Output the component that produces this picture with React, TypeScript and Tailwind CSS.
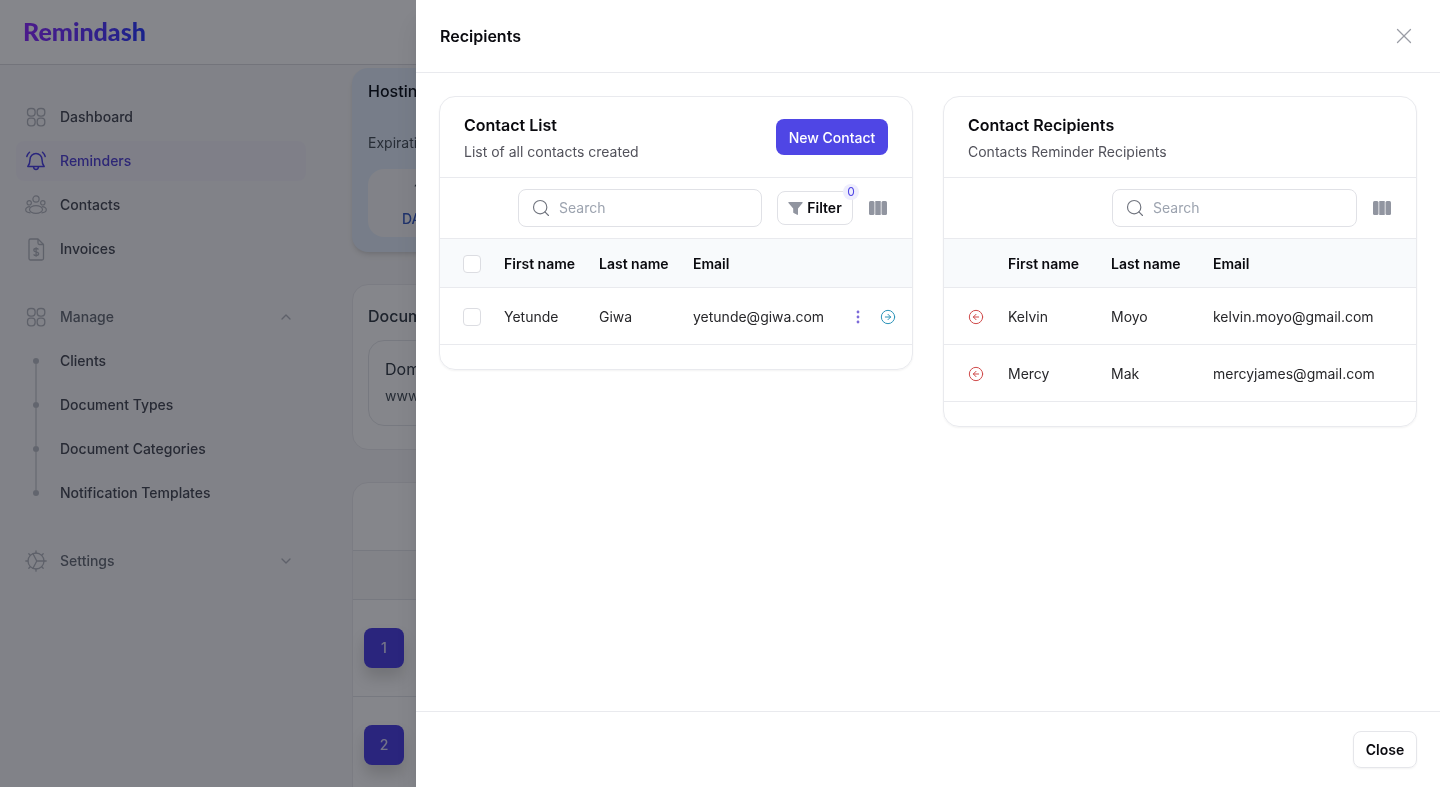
import { ChevronDown, ChevronUp, CircleArrowLeft, CircleArrowRight, Search, X } from "lucide-react";

type Contact = { first: string; last: string; email: string };

const available: Contact[] = [{ first: "Yetunde", last: "Giwa", email: "yetunde@giwa.com" }];
const recipients: Contact[] = [
  { first: "Kelvin", last: "Moyo", email: "kelvin.moyo@gmail.com" },
  { first: "Mercy", last: "Mak", email: "mercyjames@gmail.com" },
];

function GridIcon() {
  return (
    <svg width="24" height="24" viewBox="0 0 24 24" fill="none" stroke="currentColor" strokeWidth="1.3">
      <rect x="3.5" y="3.5" width="7.6" height="7.6" rx="3" />
      <rect x="13.2" y="3.5" width="7.6" height="7.6" rx="3" />
      <rect x="3.5" y="13.2" width="7.6" height="7.6" rx="3" />
      <rect x="13.2" y="13.2" width="7.6" height="7.6" rx="3" />
    </svg>
  );
}

function BellIcon() {
  return (
    <svg width="24" height="24" viewBox="0 0 24 24" fill="none" stroke="currentColor" strokeWidth="1.5" strokeLinecap="round" strokeLinejoin="round">
      <path d="M6 10.5a6 6 0 0 1 12 0c0 4 1 5.6 2.2 7H3.8C5 16.100 6 14.500 6 10.500Z" />
      <path d="M9.500 17.800c.3 1.800 1.300 2.700 2.500 2.700s2.200-.9 2.500-2.700" />
      <path d="M2.800 7.500C3.300 5.700 4.200 4.300 5.500 3.200M21.200 7.500c-.5-1.800-1.400-3.200-2.700-4.300" />
    </svg>
  );
}

function PeopleIcon() {
  return (
    <svg width="24" height="24" viewBox="0 0 24 24" fill="none" stroke="currentColor" strokeWidth="1.2">
      <circle cx="12" cy="6" r="3.100" />
      <circle cx="5.200" cy="9.800" r="2.200" />
      <circle cx="18.800" cy="9.800" r="2.200" />
      <ellipse cx="12" cy="16.500" rx="6.500" ry="3.900" />
      <path d="M6.200 13.600C3.400 13.800 1.700 15.200 1.700 16.800s1.800 2.800 4.800 3M17.800 13.600c2.800.2 4.500 1.600 4.500 3.200s-1.800 2.800-4.800 3" />
    </svg>
  );
}

function InvoiceIcon() {
  return (
    <svg width="24" height="24" viewBox="0 0 24 24" fill="none" stroke="currentColor" strokeWidth="1.3" strokeLinejoin="round">
      <path d="M5 3.500a1.500 1.500 0 0 1 1.500-1.500H14l5.500 5.500v14a1.500 1.500 0 0 1-1.500 1.500H6.500A1.500 1.500 0 0 1 5 21.500Z" />
      <path d="M14 2v4a1.500 1.500 0 0 0 1.500 1.500h4" />
      <path d="M14.500 12.500c-.5-.8-1.400-1-2.400-1-1.300 0-2.300.6-2.300 1.700 0 2.400 4.900 1.200 4.900 3.500 0 1.100-1.100 1.800-2.500 1.800-1.100 0-2.100-.4-2.600-1.200M12.100 10.200v9.600" />
    </svg>
  );
}

function SettingsIcon() {
  return (
    <svg width="24" height="24" viewBox="0 0 24 24" fill="none" stroke="currentColor" strokeWidth="1.3" strokeLinecap="round">
      <circle cx="12" cy="12" r="8" />
      <path d="M12 1.800v2.200M12 20v2.200M1.800 12H4M20 12h2.200M4.800 4.800l1.500 1.500M17.700 17.700l1.500 1.500M4.800 19.200l1.500-1.500M17.700 6.300l1.500-1.500" />
      <path d="M9 4.800 12.800 12l7 0M12.800 12 9 19.200" />
    </svg>
  );
}

function FunnelIcon() {
  return (
    <svg width="15" height="15" viewBox="0 0 15 15" fill="#9195a0">
      <path d="M1 1h13c.6 0 .9.700.5 1.100L10 7.500v5.800c0 .5-.5.800-.9.500L5.700 12a.8.800 0 0 1-.5-.7V7.500L.5 2.100C.1 1.700.4 1 1 1Z" />
    </svg>
  );
}

function ColumnsIcon() {
  return (
    <svg width="18" height="14" viewBox="0 0 18 14" fill="#9195a0">
      <rect x="0" y="0" width="5.500" height="14" rx="1.500" />
      <rect x="6.250" y="0" width="5.500" height="14" rx="0.500" />
      <rect x="12.500" y="0" width="5.500" height="14" rx="1.500" />
    </svg>
  );
}

function DotsIcon() {
  return (
    <svg width="4" height="14" viewBox="0 0 4 14" fill="#7c6ad8">
      <circle cx="2" cy="2" r="1.400" />
      <circle cx="2" cy="7" r="1.400" />
      <circle cx="2" cy="12" r="1.400" />
    </svg>
  );
}

function NavRow({ icon, label, active, muted, chevron }: { icon: React.ReactNode; label: string; active?: boolean; muted?: boolean; chevron?: React.ReactNode }) {
  return (
    <div className={`flex h-10 items-center gap-3 rounded-lg pl-2 pr-3 text-sm font-medium ${active ? "bg-[#f3f2f9] text-[#5648d8]" : muted ? "text-[#6b7280]" : "text-[#4b5060]"}`}>
      <span className={active ? "text-[#4f46e5]" : "text-[#b4b8c2]"}>{icon}</span>
      <span className="flex-1">{label}</span>
      {chevron}
    </div>
  );
}

function SubRow({ label, first, last }: { label: string; first?: boolean; last?: boolean }) {
  return (
    <div className="flex h-11 items-center gap-3 pl-2 text-sm font-medium text-[#4b5060]">
      <span className="flex h-full w-6 flex-col items-center">
        <span className={`w-0.5 flex-1 ${first ? "bg-transparent" : "bg-[#d8dae0]"}`} />
        <span className="size-1.5 rounded-full bg-[#bcc0ca]" />
        <span className={`w-0.5 flex-1 ${last ? "bg-transparent" : "bg-[#d8dae0]"}`} />
      </span>
      <span>{label}</span>
    </div>
  );
}

function Sidebar() {
  return (
    <aside className="w-[352px] shrink-0 pl-4 pr-[46px] pt-8">
      <div className="flex flex-col gap-1">
        <NavRow icon={<GridIcon />} label="Dashboard" />
        <NavRow icon={<BellIcon />} label="Reminders" active />
        <NavRow icon={<PeopleIcon />} label="Contacts" />
        <NavRow icon={<InvoiceIcon />} label="Invoices" />
      </div>
      <div className="mt-[28px]">
        <NavRow icon={<GridIcon />} label="Manage" muted chevron={<ChevronUp size={16} className="text-[#b4b8c2]" />} />
        <div className="mt-0.5">
          <SubRow label="Clients" first />
          <SubRow label="Document Types" />
          <SubRow label="Document Categories" />
          <SubRow label="Notification Templates" last />
        </div>
      </div>
      <div className="mt-[26px]">
        <NavRow icon={<SettingsIcon />} label="Settings" muted chevron={<ChevronDown size={16} className="text-[#b4b8c2]" />} />
      </div>
    </aside>
  );
}

function Backdrop() {
  return (
    <main className="flex min-w-0 flex-1 flex-col gap-8 pt-[3px]">
      <section className="h-[184px] rounded-2xl bg-[#e4eefb] p-4 shadow-md">
        <h2 className="-mt-[5px] text-base font-medium text-[#111827]">Hosting Renewal</h2>
        <p className="mt-[30px] text-sm text-[#4b5563]">Expiration Date</p>
        <div className="mt-4 flex h-[68px] w-full flex-col items-start rounded-2xl bg-[#f7f8f9] pl-[34px] pt-2">
          <span className="pl-3 text-lg text-[#4b5563]">15</span>
          <span className="mt-1 text-sm font-medium text-[#3b5fc4]">DAYS</span>
        </div>
      </section>
      <section className="h-[166px] rounded-2xl border border-[#ececf0] bg-white p-[15px]">
        <h2 className="mt-1 text-base font-medium text-[#374151]">Documents</h2>
        <div className="mt-3 h-[86px] rounded-2xl border border-[#e5e7eb] px-4 pt-4">
          <p className="text-base text-[#374151]">Domain Name</p>
          <p className="mt-[5px] text-sm text-[#4b5563]">www.example.com</p>
        </div>
      </section>
      <section className="rounded-t-2xl border border-[#ececf0] bg-white">
        <div className="h-[68px] border-b border-[#e5e7eb]" />
        <div className="h-[49px] border-b border-[#e5e7eb] bg-[#fafafa]" />
        {[1, 2].map((n) => (
          <div key={n} className="flex h-[97px] items-center border-b border-[#e5e7eb] pl-[11px]">
            <span className="flex size-10 items-center justify-center rounded-lg bg-[#4f46e5] text-sm font-medium text-white/80 shadow-[0_10px_15px_rgba(0,0,0,0.15)]">{n}</span>
          </div>
        ))}
      </section>
    </main>
  );
}

function CardHeader({ title, subtitle, action }: { title: string; subtitle: string; action?: React.ReactNode }) {
  return (
    <div className="flex h-[81px] items-center justify-between border-b border-[#e9eaee] px-6">
      <div>
        <h3 className="text-base font-semibold leading-6 text-[#0a0a0f]">{title}</h3>
        <p className="mt-[5px] text-sm leading-5 text-[#52525b]">{subtitle}</p>
      </div>
      {action}
    </div>
  );
}

function SearchBox({ width }: { width: string }) {
  return (
    <label className={`flex h-[38px] items-center gap-2 rounded-lg border border-[#e0e1e6] px-3 ${width}`}>
      <Search size={20} strokeWidth={1.4} className="shrink-0 text-[#71757f]" />
      <input placeholder="Search" className="w-full bg-transparent text-sm text-[#111827] outline-none placeholder:text-[#9ca3af]" />
    </label>
  );
}

function ContactTable({ rows, selectable, widths }: { rows: Contact[]; selectable?: boolean; widths: [string, string] }) {
  const cellBorder = "border-b border-[#e9eaee] pt-px";
  return (
    <table className="w-full table-fixed border-separate border-spacing-0 text-left text-sm">
      <thead>
        <tr className="bg-[#f8fafc] text-[#0a0a0f]">
          <th className={`h-[49px] w-16 pl-[23px] ${cellBorder}`}>
            {selectable && <span className="block size-[18px] rounded border border-[#dcdde2] bg-white" />}
          </th>
          <th className={`font-semibold ${widths[0]} ${cellBorder}`}>First name</th>
          <th className={`font-semibold ${widths[1]} ${cellBorder}`}>Last name</th>
          <th className={`font-semibold ${cellBorder}`}>Email</th>
        </tr>
      </thead>
      <tbody className="text-[#27272a]">
        {rows.map((row) => (
          <tr key={row.email}>
            <td className={`h-[57px] pl-[23px] ${cellBorder}`}>
              {selectable ? (
                <span className="block size-[18px] rounded border border-[#dcdde2] bg-white" />
              ) : (
                <CircleArrowLeft size={16} strokeWidth={1.5} className="ml-px text-[#cf4a4a]" />
              )}
            </td>
            <td className={cellBorder}>{row.first}</td>
            <td className={cellBorder}>{row.last}</td>
            <td className={cellBorder}>
              <div className="flex items-center">
                <span className="flex-1">{row.email}</span>
                {selectable && (
                  <span className="flex items-center gap-5 pr-4">
                    <DotsIcon />
                    <CircleArrowRight size={16} strokeWidth={1.5} className="text-[#2b93b8]" />
                  </span>
                )}
              </div>
            </td>
          </tr>
        ))}
      </tbody>
    </table>
  );
}

function Drawer() {
  return (
    <div className="absolute inset-y-0 right-0 flex w-[1024px] flex-col bg-white shadow-xl">
      <div className="flex h-[73px] shrink-0 items-center justify-between border-b border-[#e9eaee] pl-6 pr-[23px]">
        <h2 className="text-base font-semibold text-[#0a0a0f]">Recipients</h2>
        <X size={26} strokeWidth={1.2} className="text-[#9a9da5]" />
      </div>

      <div className="grid flex-1 grid-cols-2 items-start gap-[30px] px-[23px] py-[23px]">
        <div className="overflow-hidden rounded-2xl border border-[#e9eaee] shadow-xs">
          <CardHeader
            title="Contact List"
            subtitle="List of all contacts created"
            action={<button className="h-9 w-[112px] rounded-lg bg-[#4f46e5] pt-px text-sm font-medium text-white">New Contact</button>}
          />
          <div className="flex h-[61px] items-center justify-end border-b border-[#e9eaee] pr-[25px]">
            <SearchBox width="w-[244px]" />
            <button className="relative ml-[15px] flex h-[34px] w-[76px] items-center justify-center gap-1 rounded-lg border border-[#e0e1e6] text-sm font-semibold text-[#0a0a0f]">
              <FunnelIcon />
              Filter
              <span className="absolute -right-[7px] -top-2 flex size-4 items-center justify-center rounded-full bg-[#eeedfd] text-xs font-normal text-[#4f46e5]">0</span>
            </button>
            <span className="ml-4"><ColumnsIcon /></span>
          </div>
          <ContactTable rows={available} selectable widths={["w-[95px]", "w-[94px]"]} />
          <div className="h-6" />
        </div>

        <div className="overflow-hidden rounded-2xl border border-[#e9eaee] shadow-xs">
          <CardHeader title="Contact Recipients" subtitle="Contacts Reminder Recipients" />
          <div className="flex h-[61px] items-center justify-end border-b border-[#e9eaee] pr-[25px]">
            <SearchBox width="w-[245px]" />
            <span className="ml-4"><ColumnsIcon /></span>
          </div>
          <ContactTable rows={recipients} widths={["w-[103px]", "w-[102px]"]} />
          <div className="h-6" />
        </div>
      </div>

      <div className="flex h-[76px] shrink-0 items-center justify-end border-t border-[#e9eaee] px-[23px]">
        <button className="h-[37px] w-16 rounded-lg border border-[#e5e6ea] text-sm font-semibold text-[#0a0a0f] shadow-xs">Close</button>
      </div>
    </div>
  );
}

export default function App() {
  return (
    <div className="relative h-[787px] overflow-hidden bg-[#f8f8f9] [font-family:Inter,sans-serif]">
      <header className="flex h-[65px] items-center border-b border-[#dcdde2] bg-white pl-[23px]">
        <span className="bg-gradient-to-r from-[#9030ff] to-[#2a40ff] bg-clip-text text-[25px] font-black text-transparent [font-family:Lato,sans-serif]">Remindash</span>
      </header>
      <div className="flex">
        <Sidebar />
        <Backdrop />
      </div>
      <div className="absolute inset-0 bg-[#85868b] mix-blend-multiply" />
      <Drawer />
    </div>
  );
}
